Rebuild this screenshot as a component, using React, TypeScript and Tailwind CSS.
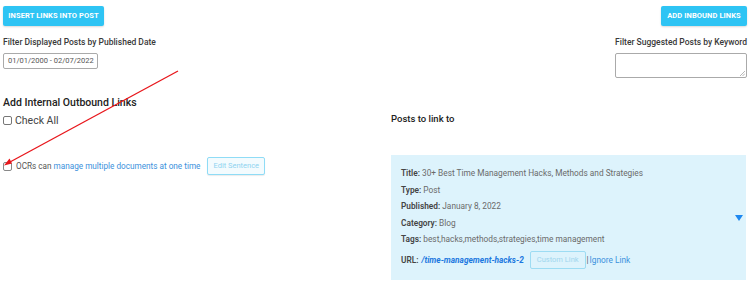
import React from "react";

export default function App() {
  const font = { fontFamily: "Roboto, 'Noto Sans', sans-serif" };
  return (
    <div className="relative w-[750px] h-[297px] bg-white overflow-hidden text-[#333]" style={font}>
      <div className="flex justify-between px-[3px] pt-[6px]">
        <button className="h-[20px] w-[101px] rounded-[2px] bg-[#2ec4f4] text-white text-[7.5px] font-bold tracking-[0.1px] shadow-[0_1px_2px_rgba(0,0,0,0.15)]">
          INSERT LINKS INTO POST
        </button>
        <button className="h-[20px] w-[86px] rounded-[2px] bg-[#2ec4f4] text-white text-[7.5px] font-bold tracking-[0.1px] shadow-[0_1px_2px_rgba(0,0,0,0.15)]">
          ADD INBOUND LINKS
        </button>
      </div>
      <div className="flex justify-between px-[3px] mt-[11px]">
        <div className="flex flex-col">
          <div className="text-[8.5px] font-medium leading-[11px] text-[#3a3a3a]">Filter Displayed Posts by Published Date</div>
          <div className="mt-[5px] w-[95px] h-[16px] border border-[#aaa] rounded-[2px] text-[7.5px] text-[#555] flex items-center pl-[4px]">
            01/01/2000 - 02/07/2022
          </div>
        </div>
        <div className="flex flex-col items-end">
          <div className="text-[8.5px] font-medium leading-[11px] text-[#3a3a3a]">Filter Suggested Posts by Keyword</div>
          <div className="mt-[5px] w-[132px] h-[25px] border border-[#aaa] rounded-[2px] relative">
            <svg className="absolute right-[1px] bottom-[1px]" width="5" height="5" viewBox="0 0 5 5">
              <path d="M0 5 L5 0 M2.5 5 L5 2.5" stroke="#999" strokeWidth="0.7" />
            </svg>
          </div>
        </div>
      </div>
      <div className="flex mt-[18px]">
        <div className="w-[391px] pl-[3px]">
          <div className="text-[10.5px] font-medium leading-[13px] text-[#222]">Add Internal Outbound Links</div>
          <label className="flex items-center mt-[5px] gap-[3px] text-[10.5px] text-[#444] leading-[13px]">
            <span className="w-[9px] h-[9px] border border-[#777] rounded-[2px] bg-white" />
            Check All
          </label>
          <div className="flex items-center mt-[30px] gap-[4px]">
            <span className="w-[9px] h-[9px] border border-[#888] rounded-[2px] bg-white" />
            <span className="text-[8.2px] text-[#555]">
              OCRs can <span className="text-[#3b91dc]">manage multiple documents at one time</span>
            </span>
            <span className="ml-[3px] h-[18px] px-[5px] flex items-center border border-[#8fdcf6] bg-[#f3fbfe] rounded-[2px] text-[7.5px] text-[#8fd3f0] shadow-[0_1px_1px_rgba(0,0,0,0.08)]">
              Edit Sentence
            </span>
          </div>
        </div>
        <div className="flex-1 pr-[4px]">
          <div className="mt-[17px] text-[9.5px] font-medium leading-[12px] text-[#222]">Posts to link to</div>
          <div className="mt-[30px] h-[125px] bg-[#ddf3fc] relative pl-[10px] pt-[13px] text-[8.3px] text-[#6a6a6a] leading-[10px]">
            <div><b className="text-[#444] font-semibold">Title:</b> 30+ Best Time Management Hacks, Methods and Strategies</div>
            <div className="mt-[6.5px]"><b className="text-[#444] font-semibold">Type:</b> Post</div>
            <div className="mt-[6.5px]"><b className="text-[#444] font-semibold">Published:</b> January 8, 2022</div>
            <div className="mt-[6.5px]"><b className="text-[#444] font-semibold">Category:</b> Blog</div>
            <div className="mt-[6.5px]"><b className="text-[#444] font-semibold">Tags:</b> best,hacks,methods,strategies,time management</div>
            <div className="mt-[7px] flex items-center">
              <b className="text-[#444] font-semibold mr-[3px]">URL:</b>
              <b className="text-[#1c78e0] font-bold italic">/time-management-hacks-2</b>
              <span className="ml-[6px] h-[18px] px-[6px] flex items-center border border-[#9ddcf3] rounded-[2px] text-[7.5px] text-[#9fd6ee]">Custom Link</span>
              <span className="ml-[1px] text-[#555]">|</span>
              <span className="ml-[1px] text-[#3b91dc]">Ignore Link</span>
            </div>
            <svg className="absolute left-[344px] top-[60px]" width="8" height="6" viewBox="0 0 8 6">
              <path d="M0 0 L8 0 L4 6 Z" fill="#1e88f0" />
            </svg>
          </div>
        </div>
      </div>
      <svg className="absolute left-0 top-0 pointer-events-none" width="750" height="297">
        <line x1="178" y1="71" x2="10" y2="162" stroke="#e8161b" strokeWidth="1.3" />
        <path d="M4 165.5 L9.5 158.5 L12 163.5 Z" fill="#e8161b" />
      </svg>
    </div>
  );
}
